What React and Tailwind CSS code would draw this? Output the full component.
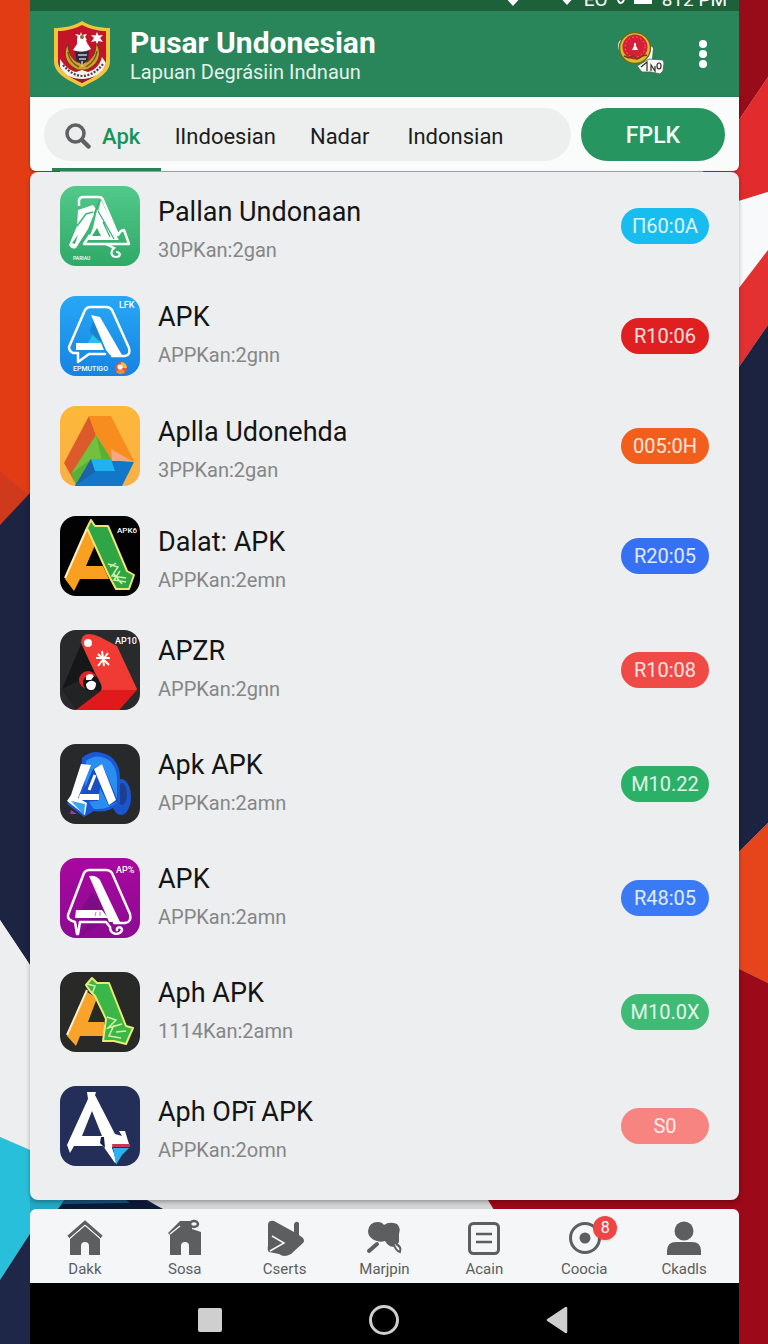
import React from "react";

function Backdrop() {
  return (
    <svg
      aria-hidden="true"
      viewBox="0 0 768 1344"
      preserveAspectRatio="none"
      className="absolute inset-0 h-full w-full"
    >
      <rect width="768" height="1344" fill="#d3d5d7" />
      <path d="M0 0H60V500H30L0 525Z" fill="#e23c15" />
      <path d="M0 472L30 496L0 525Z" fill="#cf3a1c" />
      <path d="M0 525L60 461V1010L0 920Z" fill="#1c2442" />
      <path d="M0 920L60 1010V1163L0 1137Z" fill="#eceeef" />
      <path d="M0 1137L60 1163V1209H46L0 1280Z" fill="#28bfdb" />
      <path d="M0 1280L46 1209L64 1197H142L166 1211V1344H0Z" fill="#1f2748" />
      <path d="M30 1197H66L58 1212H30Z" fill="#23a9c5" />
      <path d="M130 1201L145 1201L163 1209H58L64 1201Z" fill="#0b1a36" />
      <path d="M62 1204L66 1197H122L130 1203L64 1204Z" fill="#17547f" />
      <path d="M700 0H768V77L739 120L700 170Z" fill="#970c18" />
      <path d="M768 77V192L700 213V176L739 120Z" fill="#e22b2c" />
      <path d="M768 192V250L739 288L700 330V213Z" fill="#f8f9fa" />
      <path d="M768 250V325L739 367L700 420V340L739 288Z" fill="#e33030" />
      <path d="M768 325V823L739 852L700 890V423L739 367Z" fill="#1c2340" />
      <path d="M768 823V983L739 969L700 950V890Z" fill="#e6441b" />
      <path d="M768 983V1344H700V1220H500L488 1200H700V950Z" fill="#9c0918" />
    </svg>
  );
}

function StatusBar() {
  return (
    <div className="flex h-[11px] items-end justify-end gap-2 overflow-hidden bg-[#1d613a] pr-3 text-white">
      <svg aria-hidden="true" viewBox="0 0 72 11" className="h-[11px] w-[72px]">
        <path d="M0 -4H18L9 6Z M54 -5H72L63 5Z" fill="#fff" />
      </svg>
      <span className="pb-[5px] text-[19px] leading-3">EO</span>
      <svg aria-hidden="true" viewBox="0 0 38 11" className="h-[11px] w-[38px]">
        <path d="M2 0C3 4 7 4 8 -1" fill="none" stroke="#fff" strokeWidth="2" />
        <path d="M18 -6H36V4H18Z" fill="#fff" />
      </svg>
      <span className="pb-[5px] text-[19px] leading-3">812 PM</span>
    </div>
  );
}

function Crest() {
  return (
    <svg aria-hidden="true" viewBox="0 0 56 66" className="h-[66px] w-14 shrink-0">
      <path d="M28 0C36 5 46 7 56 7V40C56 53 42 59 28 66C14 59 0 53 0 40V7C10 7 20 5 28 0Z" fill="#f3c53d" />
      <path d="M28 4C36 8 45 10 52 10V40C52 50 40 56 28 62C16 56 4 50 4 40V10C11 10 20 8 28 4Z" fill="#c4142a" />
      <path d="M5 43C8 52 18 57 28 62C38 57 48 52 51 43L40 50H16Z" fill="#8c1f2a" />
      <path d="M14 23C8 33 12 44 24 49H32C45 44 49 32 42 22C42 31 39 37 33 41H23C17 37 14 31 14 23Z" fill="#d3a02c" stroke="#5a3a18" strokeWidth="1" />
      <path d="M14 31C15 38 19 43 25 46M43 30C42 38 37 43 32 46" stroke="#6f531c" strokeWidth="1.400" fill="none" />
      <path d="M23 17L26 14L31 16L33 22L37 28Q28 33 19 29L23 23Z" fill="#fff" />
      <path d="M21 30Q28 32 35 30L34 39L28 44L22 39Z" fill="#2c2b3f" />
      <path d="M24 34H33M25 38H32M28 40V46" stroke="#c9c6cf" strokeWidth="1.500" />
      <path d="M6 38C11 46 17 50 22 51L28 49L34 51C41 49 46 44 48 36L52 42C49 53 38 58 28 58C18 58 10 54 6 46Z" fill="#f4f2ee" />
      <path d="M9 44C15 51 22 55 28 55C35 55 43 51 49 43" fill="none" stroke="#4e4446" strokeWidth="2.200" strokeDasharray="2 1.500" />
      <path d="M43 11L44.500 14.500L49 14L46 17L49 21L44.500 20L43 23L41.500 20L37 21L40 17L37 14L41.500 14.500Z" fill="#fff" />
      <path d="M27 11L28 14L33 13L31 16L33 19L28 18L23 19L24 16L21 13L26 14Z" fill="#fff" />
      <circle cx="28" cy="16" r="2" fill="#8d6b2c" />
    </svg>
  );
}

function Seal() {
  return (
    <svg aria-hidden="true" viewBox="0 0 48 46" className="h-[46px] w-12">
      <path d="M4 9C0 10 1 19 3 21L8 27L12 15ZM31 12L36 17L35 28L28 32Z" fill="#fff" />
      <circle cx="18" cy="17" r="15.500" fill="#d8bf2f" stroke="#6c6a20" strokeWidth="1.500" />
      <circle cx="18" cy="16" r="12.500" fill="#d91f36" />
      <circle cx="18" cy="16" r="10" fill="none" stroke="#f07a80" strokeWidth="1" strokeDasharray="1.500 2.500" />
      <path d="M17 12H19V15L21 19H15L17 15Z" fill="#fff" />
      <path d="M7 25L12 27L16 25L20 28L25 25L30 24" stroke="#7a3b1b" strokeWidth="1.500" fill="none" />
      <path d="M20 35L32 28L46 29L47 32L46 40L43 43L34 41H25Z" fill="#f8f8f6" stroke="#476552" strokeWidth="0.800" />
      <path d="M24 36L30 31V40M34 40V34L38 40V35" stroke="#2d2d2d" strokeWidth="1.200" fill="none" />
      <ellipse cx="42" cy="35" rx="2" ry="3" stroke="#2d2d2d" strokeWidth="1.200" fill="none" />
    </svg>
  );
}

function Header() {
  return (
    <header className="flex h-[86px] items-center bg-[#29855a] pl-6 pr-5 text-white">
      <Crest />
      <div className="ml-5 flex-1 pt-[3px]">
        <h1 className="text-[30px] font-bold leading-8">Pusar Undonesian</h1>
        <p className="text-[20px] leading-[26px] text-[#e3f3ea]">Lapuan Degrásiin Indnaun</p>
      </div>
      <button type="button" aria-label="Profile" className="mr-[22px]">
        <Seal />
      </button>
      <button type="button" aria-label="More options" className="px-3">
        <svg aria-hidden="true" viewBox="0 0 8 28" className="h-7 w-2 overflow-visible">
          <circle cx="4" cy="4" r="4" fill="#fff" />
          <circle cx="4" cy="14" r="4" fill="#fff" />
          <circle cx="4" cy="24" r="4" fill="#fff" />
        </svg>
      </button>
    </header>
  );
}

function SearchBar() {
  return (
    <div className="mb-px flex h-[74px] items-center gap-[10px] rounded-b-md bg-[#fafbfb] px-[14px] shadow-[0_1px_3px_rgba(0,0,0,0.35)]">
      <nav
        aria-label="Categories"
        className="flex h-[53px] flex-1 items-stretch rounded-full bg-[#edefef] pl-2 text-[22px] text-[#1c1c1c]"
      >
        <button
          type="button"
          aria-pressed="true"
          className="relative flex w-[109px] items-center gap-[11px] pl-[13px] pt-1 font-medium text-[#16935a]"
        >
          <svg aria-hidden="true" viewBox="0 0 26 26" className="h-[26px] w-[26px] shrink-0">
            <circle cx="10.500" cy="10.500" r="8.500" fill="none" stroke="#5f6163" strokeWidth="3.500" />
            <path d="M17 17L23.500 23.500" stroke="#5f6163" strokeWidth="4.500" strokeLinecap="round" />
          </svg>
          Apk
          <span className="absolute -bottom-[10px] left-0 h-[3px] w-full bg-[#258257]" />
        </button>
        <button type="button" className="ml-[14px] pt-1">lIndoesian</button>
        <button type="button" className="ml-[34px] pt-1">Nadar</button>
        <button type="button" className="ml-[38px] pt-1">Indonsian</button>
      </nav>
      <button
        type="button"
        className="h-[53px] w-36 rounded-full bg-[#269560] pt-1 text-[23px] font-medium text-[#f0fbf5]"
      >
        FPLK
      </button>
    </div>
  );
}

function Tag({ x, y, size = 10, children, fill = "#fff" }) {
  return (
    <text x={x} y={y} fontSize={size} fontWeight="500" fill={fill}>
      {children}
    </text>
  );
}

const art = {
  leaf: (
    <>
      <rect width="80" height="80" fill="url(#gGreen)" />
      <path d="M19 20V14Q20 11 23 11H39Q42 11 43 14L58 49L61 45L64 44L69 58H24L30 49" fill="none" stroke="#fff" strokeWidth="2.500" strokeLinejoin="round" />
      <path d="M18 24L33 19L36 23L28 43L16 62Q12 64 9 59L17 40Z" fill="#fff" />
      <path d="M12 57L18 49L15 58Z" fill="#3ab371" />
      <path d="M17 40L26 28L33 26" fill="none" stroke="#3fb877" strokeWidth="1.500" />
      <path d="M37 24L43 28L59 54H28L33 42Z" fill="#fff" />
      <path d="M41 14L58 50L52 53L38 26Z" fill="#fff" />
      <path d="M37 42L41 50H32Z" fill="#35ad6d" />
      <path d="M38 25L54 53M43 36L50 51M40 14L34 28" stroke="#35ad6d" strokeWidth="1.200" />
      <path d="M46 58L54 62C50 65 51 71 56 71C61 71 61 66 56 66" fill="none" stroke="#fff" strokeWidth="2.200" />
      <Tag x="13" y="74" size="5">PARIAU</Tag>
    </>
  ),
  outline: (
    <>
      <rect width="80" height="80" fill="url(#gBlue)" />
      <path d="M34 36L42 47H28Z" fill="#29c0ef" />
      <path d="M34 20L44 48L38 44L30 36Z" fill="#1b83d2" />
      <path d="M18 57H13Q9 55 9 51L25 14Q27 11 30 11H46Q50 11 52 14L69 52Q71 59 65 60H52M18 57V66L29 58H45" fill="none" stroke="#fff" strokeWidth="2.500" strokeLinejoin="round" strokeLinecap="round" />
      <path d="M31 19L40 21L62 59H50L46 54Z" fill="#fff" />
      <path d="M16 47H41L44 54H16Z" fill="#fff" />
      <Tag x="59" y="12" size="9">LFK</Tag>
      <Tag x="13" y="75" size="7">EPMUTIGO</Tag>
      <circle cx="61" cy="72" r="6" fill="#e8563c" />
      <path d="M61 66A6 6 0 0 1 67 72L61 72Z" fill="#f7bb3a" />
      <path d="M56 76A6 6 0 0 0 65 76L61 72Z" fill="#f08a3a" />
      <circle cx="60" cy="71" r="2.500" fill="#fff" />
    </>
  ),
  drive: (
    <>
      <rect width="80" height="80" fill="url(#gAmber)" />
      <path d="M29 10L36 29L14 75L4 57Z" fill="#dd5a2a" />
      <path d="M29 10H51L74 55L52 54L36 29Z" fill="#f78d1f" />
      <path d="M36 29L52 54L30 55L16 79L11 68Z" fill="#58b036" />
      <path d="M36 29L42 54H30L11 68Z" fill="#74bf3d" />
      <path d="M31 53L74 56L62 80H15Z" fill="#1277c9" />
      <path d="M31 53L36 65L15 80Z" fill="#1c63ac" />
      <path d="M31 53H51L55 65H35Z" fill="#1fb1f0" />
      <path d="M51 43L72 55H52Z" fill="#f6a680" />
    </>
  ),
  ribbonBlack: (
    <>
      <rect width="80" height="80" fill="#020202" />
      <path d="M27 12L5 63L14 75L20 63H49L43 50H26L36 27Z" fill="#faa021" />
      <path d="M27 12L5 62" stroke="#fff3cf" strokeWidth="2" />
      <path d="M27 12L31 4L35 10H48L67 55L74 59L69 73H56L48 58Z" fill="#30a545" stroke="#f0e66b" strokeWidth="2" strokeLinejoin="round" />
      <path d="M48 48L58 51L52 60L66 62M56 47L50 51M54 58L62 68M60 55L54 64L66 66" fill="none" stroke="#c9f5a8" strokeWidth="1.500" />
      <Tag x="57" y="17" size="8">APK6</Tag>
    </>
  ),
  redFold: (
    <>
      <rect width="80" height="80" fill="#292a2c" />
      <path d="M22 12L2 59L17 80L42 58Z" fill="#161718" />
      <path d="M2 59L20 50L40 62L17 80Z" fill="#222324" />
      <path d="M21 13Q21 4 29 4Q34 4 40 7L57 16L77 59L59 80H16L39 64Q43 60 41 54Q38 48 35 43Z" fill="#f03a34" />
      <path d="M42 60H77L59 80H16Z" fill="#e0191b" />
      <circle cx="28" cy="13" r="4" fill="#fff" />
      <path d="M42 21L44 36M36 28H50M48 23L38 36M38 24L49 35" stroke="#fff" strokeWidth="2" />
      <circle cx="28" cy="50" r="9" fill="#e0262a" />
      <circle cx="31" cy="53" r="8" fill="#161718" />
      <path d="M26 46Q30 42 34 46L31 50H26ZM26 54Q31 48 36 53Q36 61 30 60Q26 59 26 54Z" fill="#fff" />
      <Tag x="55" y="14" size="9">AP10</Tag>
    </>
  ),
  blueBlob: (
    <>
      <rect width="80" height="80" fill="#27292b" />
      <ellipse cx="61" cy="53" rx="10" ry="18" fill="#1c56cf" />
      <ellipse cx="62" cy="50" rx="5" ry="11" fill="#1a3f93" />
      <path d="M22 14Q33 4 48 11Q60 18 60 34L60 58Q50 70 34 67L24 73L7 60L20 42Z" fill="#1a58d6" />
      <path d="M26 17Q37 8 50 17Q58 25 57 40L57 58Q48 66 34 65Q25 55 25 38Z" fill="#2a8df0" />
      <path d="M33 25L42 20L58 57L49 62L40 44L38 57L19 58L24 46Z" fill="#184fc4" />
      <path d="M21 20L31 21L18 54L27 59L25 71L7 57L11 51Z" fill="#fff" />
      <path d="M11 57L25 60L24 71Z" fill="#3aa4f5" />
      <path d="M34 25L42 20L56 56L49 61Z" fill="#fff" />
      <path d="M20 50H39V56H18Z" fill="#fff" />
      <path d="M35 31L29 46" stroke="#fff" strokeWidth="3" />
      <path d="M11 66L17 70L10 70Z" fill="#8a3ec0" />
    </>
  ),
  outlinePurple: (
    <>
      <rect width="80" height="80" fill="url(#gPurple)" />
      <path d="M32 34L45 50L48 62L20 78L30 62L22 50Z" fill="#7d0c86" />
      <path d="M17 76L15 64Q7 62 8 57L24 15Q26 12 29 12H46Q50 12 52 15L70 56Q72 64 65 65H54M20 64H46L50 69C50 77 60 78 62 72C62 68 56 69 57 72M20 64L18 76" fill="none" stroke="#fff" strokeWidth="2.500" strokeLinejoin="round" strokeLinecap="round" />
      <path d="M29 18Q36 17 40 22L60 64H49L44 52Z" fill="#fff" />
      <path d="M16 52H42L48 60H15Z" fill="#fff" />
      <path d="M36 54L35 58M40 54L40 58" stroke="#b57cc0" strokeWidth="1" />
      <Tag x="56" y="15" size="9">AP%</Tag>
    </>
  ),
  ribbonGray: (
    <>
      <rect width="80" height="80" fill="#292928" />
      <path d="M27 20L7 64L16 74L20 64H45L44 50H28L37 26Z" fill="#faa32b" />
      <path d="M27 18L7 63" stroke="#fff3cf" strokeWidth="2" />
      <path d="M26 13L32 6L37 11H49L66 54L73 56L66 72L54 69H43L46 47L35 24L30 19Z" fill="#3bb749" stroke="#e9ea70" strokeWidth="2" strokeLinejoin="round" />
      <path d="M27 12L35 14L32 22M47 45L56 48L48 56L62 52M54 53L49 64L61 66M56 60L66 59" fill="none" stroke="#d0f7a0" strokeWidth="1.500" />
    </>
  ),
  navyA: (
    <>
      <rect width="80" height="80" fill="#232f59" />
      <path d="M27 6H36L35 9L55 48L62 50L59 45H65L69 58H53L52 62L57 76L55 77L43 60H14L10 67L7 59L28 13Z" fill="#fff" />
      <path d="M32 25L42 50H22Z" fill="#232f59" />
      <path d="M41 51L44 51L45 62L40 57Z" fill="#17204a" />
      <path d="M52 58H70V61H53Z" fill="#cf3553" />
      <path d="M53 62H69L62 69L56 79Z" fill="#2bb2ef" />
    </>
  ),
};

function Gradients() {
  return (
    <svg aria-hidden="true" className="absolute h-0 w-0">
      <defs>
        <linearGradient id="gGreen" x1="0" y1="0" x2="0" y2="1">
          <stop offset="0" stopColor="#52c98a" />
          <stop offset="1" stopColor="#2fa968" />
        </linearGradient>
        <linearGradient id="gBlue" x1="0" y1="0" x2="0" y2="1">
          <stop offset="0" stopColor="#27a8f6" />
          <stop offset="1" stopColor="#1683e2" />
        </linearGradient>
        <linearGradient id="gAmber" x1="0" y1="0" x2="0" y2="1">
          <stop offset="0" stopColor="#fdb838" />
          <stop offset="1" stopColor="#f9b048" />
        </linearGradient>
        <linearGradient id="gPurple" x1="0" y1="0" x2="0" y2="1">
          <stop offset="0" stopColor="#a9089f" />
          <stop offset="1" stopColor="#8c0a92" />
        </linearGradient>
      </defs>
    </svg>
  );
}

const SHORT = "h-[110px]";
const TALL = "h-[114px]";
const LOW = "pt-[9px]";
const HIGH = "pt-1";

const apps = [
  { icon: "leaf", name: "Pallan Undonaan", meta: "30PKan:2gan", tag: "П60:0A", color: "bg-[#18bdf0]", height: SHORT, text: LOW },
  { icon: "outline", name: "APK", meta: "APPKan:2gnn", tag: "R10:06", color: "bg-[#e02020]", height: SHORT, text: HIGH },
  { icon: "drive", name: "Aplla Udonehda", meta: "3PPKan:2gan", tag: "005:0H", color: "bg-[#f25f1d]", height: SHORT, text: LOW },
  { icon: "ribbonBlack", name: "Dalat: APK", meta: "APPKan:2emn", tag: "R20:05", color: "bg-[#3670f4]", height: TALL, text: LOW },
  { icon: "redFold", name: "APZR", meta: "APPKan:2gnn", tag: "R10:08", color: "bg-[#f04a46]", height: TALL, text: HIGH },
  { icon: "blueBlob", name: "Apk APK", meta: "APPKan:2amn", tag: "M10.22", color: "bg-[#2bb068]", height: TALL, text: HIGH },
  { icon: "outlinePurple", name: "APK", meta: "APPKan:2amn", tag: "R48:05", color: "bg-[#3a7af5]", height: TALL, text: HIGH },
  { icon: "ribbonGray", name: "Aph APK", meta: "1114Kan:2amn", tag: "M10.0X", color: "bg-[#40bb76]", height: TALL, text: HIGH },
  { icon: "navyA", name: "Aph OPī APK", meta: "APPKan:2omn", tag: "S0", color: "bg-[#f78481]", height: TALL, text: LOW },
];

function AppRow({ app }) {
  return (
    <li className={app.height}>
      <div className="flex h-20">
        <svg aria-hidden="true" viewBox="0 0 80 80" className="h-20 w-20 shrink-0 rounded-[16px]">
          {art[app.icon]}
        </svg>
        <div className={"ml-[18px] flex-1 " + app.text}>
          <h2 className="text-[27px] leading-[34px] text-[#141414]">{app.name}</h2>
          <p className="mt-[7px] text-[20px] leading-7 text-[#858687]">{app.meta}</p>
        </div>
        <button
          type="button"
          className={"h-9 w-[88px] self-center rounded-full text-[20px] text-white/85 " + app.color}
        >
          {app.tag}
        </button>
      </div>
    </li>
  );
}

const navIcons = {
  home: (
    <>
      <path d="M1.500 17L18 2.500L34.500 17" fill="none" stroke="#5c5e60" strokeWidth="3.500" />
      <path d="M18 6L33 19V35H22V26Q22 22 18 22Q14 22 14 26V35H3V19Z" fill="#5c5e60" />
      <path d="M3 18L18 5L33 18" fill="none" stroke="#f4f6f7" strokeWidth="1" />
    </>
  ),
  shop: (
    <>
      <path d="M1 13L13 1H25V9L34 12V35H22V26Q22 22 18 22Q14 22 14 26V35H3V15Z" fill="#5c5e60" />
      <path d="M3 14L13 6" stroke="#f4f6f7" strokeWidth="1.500" />
      <ellipse cx="27" cy="4" rx="4" ry="3" fill="#f4f6f7" stroke="#5c5e60" strokeWidth="2.500" />
    </>
  ),
  hand: (
    <>
      <path d="M1 4Q2 0 7 1L27 12V4Q29 0 32 3V15L36 18Q38 21 36 23L24 34Q17 38 12 34L2 32Q0 30 1 26Z" fill="#5c5e60" />
      <path d="M5 16L17 23L3 31" fill="none" stroke="#f4f6f7" strokeWidth="1.500" />
    </>
  ),
  clover: (
    <>
      <path d="M2 11Q3 2 12 2Q16 2 18 5Q23 1 31 4Q35 8 33 14L33 22L30 26Q24 29 19 21Q14 23 8 20Q2 17 2 11Z" fill="#5c5e60" />
      <path d="M11 24L3 31" stroke="#5c5e60" strokeWidth="4" strokeLinecap="round" />
      <path d="M30 24Q36 27 34 32Q30 31 28 25" fill="#f4f6f7" stroke="#5c5e60" strokeWidth="2" />
    </>
  ),
  list: (
    <g fill="none" stroke="#5c5e60">
      <rect x="3.500" y="3.500" width="29" height="30" rx="4" strokeWidth="3" />
      <path d="M10 14H26M10 22H26" strokeWidth="2.500" />
    </g>
  ),
  record: (
    <>
      <circle cx="19" cy="18" r="14.500" fill="none" stroke="#5c5e60" strokeWidth="3" />
      <circle cx="19" cy="18" r="5.500" fill="#5c5e60" />
    </>
  ),
  person: (
    <>
      <circle cx="18" cy="11" r="9.500" fill="#5c5e60" />
      <path d="M1 35V31Q1 22 10 22H26Q35 22 35 31V35Z" fill="#5c5e60" />
    </>
  ),
};

const navItems = [
  { icon: "home", label: "Dakk" },
  { icon: "shop", label: "Sosa" },
  { icon: "hand", label: "Cserts" },
  { icon: "clover", label: "Marjpin" },
  { icon: "list", label: "Acain" },
  { icon: "record", label: "Coocia", badge: "8" },
  { icon: "person", label: "Ckadls" },
];

function BottomNav() {
  return (
    <nav aria-label="Main" className="mt-[9px] grid h-[74px] grid-cols-7 rounded-t-md bg-[#f4f6f7] px-[5px]">
      {navItems.map((item) => (
        <a key={item.label} href={"#" + item.label} className="flex flex-col items-center pt-[11px] text-[#5b5d5f]">
          <span className="relative">
            <svg aria-hidden="true" viewBox="0 0 36 36" className="h-9 w-9 overflow-visible">
              {navIcons[item.icon]}
            </svg>
            {item.badge && (
              <span className="absolute -right-[15px] -top-1 flex h-6 w-6 items-center justify-center rounded-full bg-[#ef4444] text-base text-white shadow">
                {item.badge}
              </span>
            )}
          </span>
          <span className="mt-[3px] text-[15px] leading-5">{item.label}</span>
        </a>
      ))}
    </nav>
  );
}

function SystemNav() {
  return (
    <div className="flex min-h-[61px] flex-1 items-center justify-center gap-[147px] bg-black pr-[3px] pt-3">
      <button type="button" aria-label="Recent apps" className="h-6 w-6 rounded-[2px] bg-[#cfcfcf]" />
      <button type="button" aria-label="Home" className="h-[30px] w-[30px] rounded-full border-[3px] border-[#cfcfcf]" />
      <button type="button" aria-label="Back">
        <svg aria-hidden="true" viewBox="0 0 22 28" className="h-7 w-[22px]">
          <path d="M2 14L20 2V26Z" fill="#cfcfcf" stroke="#cfcfcf" strokeWidth="2.500" strokeLinejoin="round" />
        </svg>
      </button>
    </div>
  );
}

export default function App() {
  return (
    <div className="relative min-h-screen overflow-hidden font-[Roboto,'Liberation_Sans',sans-serif]">
      <Backdrop />
      <Gradients />
      <div className="relative ml-[30px] mr-[29px] flex min-h-screen flex-col">
        <StatusBar />
        <Header />
        <SearchBar />
        <main className="rounded-lg bg-[#eceeef] px-[30px] pt-[14px] shadow-[0_2px_4px_rgba(0,0,0,0.3)]">
          <ul>
            {apps.map((app) => (
              <AppRow key={app.icon} app={app} />
            ))}
          </ul>
        </main>
        <BottomNav />
        <SystemNav />
      </div>
    </div>
  );
}
